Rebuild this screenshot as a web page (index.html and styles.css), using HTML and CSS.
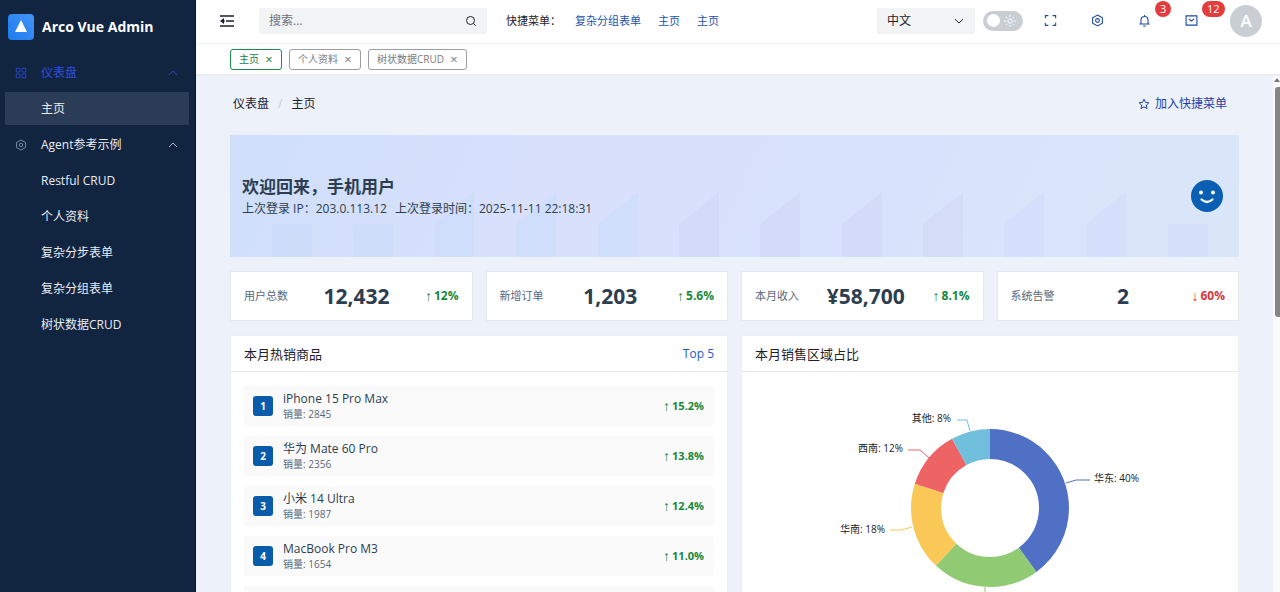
FILE: index.html
```html
<!DOCTYPE html>
<html lang="zh-CN">
<head>
<meta charset="utf-8">
<title>Arco Vue Admin</title>
<link rel="stylesheet" href="styles.css">
</head>
<body>
<svg class="defs" aria-hidden="true">
  <symbol id="hex" viewBox="0 0 48 48"><path d="M24 4 42 14v20L24 44 6 34V14Z"/><circle cx="24" cy="24" r="7"/></symbol>
  <symbol id="caret" viewBox="0 0 48 48"><path d="m8 32 16-16 16 16"/></symbol>
</svg>
<div class="app">
  <aside class="sidebar">
    <div class="brand">
      <svg class="logo" viewBox="0 0 26 26" aria-hidden="true">
        <defs><linearGradient id="lg" x1="1" y1="0" x2="0" y2="1"><stop offset="0" stop-color="#4593f5"/><stop offset="1" stop-color="#1b7cf0"/></linearGradient></defs>
        <rect width="26" height="26" rx="4" fill="url(#lg)"/><path d="m13 6 6 12H7Z" fill="#fff"/>
      </svg>
      <span class="brand-name">Arco Vue Admin</span>
    </div>
    <nav class="menu">
      <button class="item open" type="button">
        <svg class="icon" viewBox="0 0 48 48" aria-hidden="true"><path d="M5 5h15v15H5zM28 5h15v15H28zM5 28h15v15H5zM28 28h15v15H28z"/></svg>
        <span>仪表盘</span><svg class="icon caret" aria-hidden="true"><use href="#caret"/></svg>
      </button>
      <a class="item sub current" href="#">主页</a>
      <button class="item" type="button">
        <svg class="icon" aria-hidden="true"><use href="#hex"/></svg>
        <span>Agent参考示例</span><svg class="icon caret" aria-hidden="true"><use href="#caret"/></svg>
      </button>
      <a class="item sub" href="#">Restful CRUD</a>
      <a class="item sub" href="#">个人资料</a>
      <a class="item sub" href="#">复杂分步表单</a>
      <a class="item sub" href="#">复杂分组表单</a>
      <a class="item sub" href="#">树状数据CRUD</a>
    </nav>
  </aside>
  <div class="page">
    <header class="topbar">
      <button class="fold" type="button" aria-label="折叠菜单">
        <svg viewBox="0 0 14 12" aria-hidden="true"><path d="M0 1h14M6 6h8M0 11h14" fill="none" stroke="#1d2129" stroke-width="1.5"/><path d="M0 6l4-3v6z" fill="#1d2129"/><path d="M3 6h2" stroke="#1d2129"/></svg>
      </button>
      <label class="search">
        <input type="text" placeholder="搜索..." aria-label="搜索">
        <svg class="icon" viewBox="0 0 48 48" aria-hidden="true"><circle cx="22" cy="22" r="16"/><path d="m34 34 9 9"/></svg>
      </label>
      <div class="quick">
        <span class="quick-label">快捷菜单：</span>
        <a href="#">复杂分组表单</a><a href="#">主页</a><a href="#">主页</a>
      </div>
      <div class="tools">
        <div class="lang">
          <select aria-label="语言"><option>中文</option></select>
          <svg class="icon" viewBox="0 0 48 48" aria-hidden="true"><path d="m8 17 16 15 16-15"/></svg>
        </div>
        <label class="switch">
          <input type="checkbox" aria-label="深色模式">
          <svg viewBox="0 0 12 12" aria-hidden="true"><circle cx="6" cy="6" r="2.2"/><path d="M6 0v2M6 10v2M0 6h2M10 6h2M1.8 1.8l1.3 1.3M8.900 8.900l1.300 1.300M1.800 10.200l1.300-1.300M8.900 3.100l1.300-1.300"/></svg>
        </label>
        <button class="tool" type="button" aria-label="全屏"><svg class="icon" viewBox="0 0 48 48" aria-hidden="true"><path d="M5 16V6h11M32 6h11v10M43 32v10H32M16 42H5V32"/></svg></button>
        <button class="tool" type="button" aria-label="设置"><svg class="icon" aria-hidden="true"><use href="#hex"/></svg></button>
        <button class="tool" type="button" aria-label="通知"><svg class="icon" viewBox="0 0 48 48" aria-hidden="true"><path d="M24 4v5M11 37V22a13 13 0 0 1 26 0v15M5 37h38M19 44h10"/></svg><span class="badge">3</span></button>
        <button class="tool" type="button" aria-label="消息"><svg class="icon" viewBox="0 0 48 48" aria-hidden="true"><path d="M4 7h40v34H4zM14 18l10 8 10-8"/></svg><span class="badge">12</span></button>
        <span class="avatar">A</span>
      </div>
    </header>
    <div class="tabs">
      <span class="tab on">主页<button type="button" aria-label="关闭主页">×</button></span>
      <span class="tab">个人资料<button type="button" aria-label="关闭个人资料">×</button></span>
      <span class="tab">树状数据CRUD<button type="button" aria-label="关闭树状数据CRUD">×</button></span>
    </div>
    <div class="viewport">
      <main class="content">
        <div class="crumbs">
          <a href="#">仪表盘</a><span class="slash">/</span><span>主页</span>
          <button class="fav" type="button"><svg class="icon" viewBox="0 0 48 48" aria-hidden="true"><path d="m24 5 6 12 13 2-9.500 9.500L36 42l-12-6.500L12 42l2.500-13.500L5 19l13-2Z"/></svg>加入快捷菜单</button>
        </div>
        <section class="banner">
          <svg class="bars" viewBox="0 0 1009 122" preserveAspectRatio="none" aria-hidden="true">
            <g fill="#c6dbfa" opacity=".5"><path d="M42 122V89h40v33zM123 122V89h40v33zM204 122V89l40-32v65zM286 122V89l40-32v65zM368 122V89l40-32v65z"/></g>
            <g fill="#cdd3f2" opacity=".4"><path d="M449 122V89l40-32v65zM530 122V89l40-32v65zM612 122V89l40-32v65zM693 122V89l40-32v65z"/></g>
            <g fill="#d0d6fa" opacity=".45"><path d="M774 122V89l40-32v65zM856 122V89l40-32v65zM938 122V89h40v33z"/></g>
          </svg>
          <div class="hello">
            <h1>欢迎回来，手机用户</h1>
            <p><span>上次登录 IP：203.0.113.12</span><span>上次登录时间：2025-11-11 22:18:31</span></p>
          </div>
          <svg class="smile" viewBox="0 0 32 32" aria-hidden="true"><circle cx="16" cy="16" r="16" fill="#0a5fb4"/><circle cx="10" cy="12.500" r="2" fill="#fff"/><circle cx="22" cy="12.500" r="2" fill="#fff"/><path d="M10.500 19.500q5.500 5 11 0" fill="none" stroke="#fff" stroke-width="2.200" stroke-linecap="round"/></svg>
        </section>
        <section class="stats">
          <div class="stat"><span class="name">用户总数</span><strong>12,432</strong><span class="rate up"><i>↑</i>12%</span></div>
          <div class="stat"><span class="name">新增订单</span><strong>1,203</strong><span class="rate up"><i>↑</i>5.6%</span></div>
          <div class="stat"><span class="name">本月收入</span><strong>¥58,700</strong><span class="rate up"><i>↑</i>8.1%</span></div>
          <div class="stat"><span class="name">系统告警</span><strong>2</strong><span class="rate down"><i>↓</i>60%</span></div>
        </section>
        <div class="panels">
          <section class="panel">
            <header><h2>本月热销商品</h2><a href="#">Top 5</a></header>
            <ol class="goods">
              <li><b class="rank">1</b><div class="good"><span>iPhone 15 Pro Max</span><small>销量: 2845</small></div><span class="rate up"><i>↑</i>15.2%</span></li>
              <li><b class="rank">2</b><div class="good"><span>华为 Mate 60 Pro</span><small>销量: 2356</small></div><span class="rate up"><i>↑</i>13.8%</span></li>
              <li><b class="rank">3</b><div class="good"><span>小米 14 Ultra</span><small>销量: 1987</small></div><span class="rate up"><i>↑</i>12.4%</span></li>
              <li><b class="rank">4</b><div class="good"><span>MacBook Pro M3</span><small>销量: 1654</small></div><span class="rate up"><i>↑</i>11.0%</span></li>
              <li></li>
            </ol>
          </section>
          <section class="panel">
            <header><h2>本月销售区域占比</h2></header>
            <svg class="chart" viewBox="0 0 400 240" role="img" aria-label="本月销售区域占比">
              <g fill="none" stroke-width="30" transform="rotate(-90 200 136)">
                <circle cx="200" cy="136" r="64" pathLength="100" stroke="#5070c6" stroke-dasharray="40 60"/>
                <circle cx="200" cy="136" r="64" pathLength="100" stroke="#90cb74" stroke-dasharray="22 78" stroke-dashoffset="-40"/>
                <circle cx="200" cy="136" r="64" pathLength="100" stroke="#f9c856" stroke-dasharray="18 82" stroke-dashoffset="-62"/>
                <circle cx="200" cy="136" r="64" pathLength="100" stroke="#ee6464" stroke-dasharray="12 88" stroke-dashoffset="-80"/>
                <circle cx="200" cy="136" r="64" pathLength="100" stroke="#70bfdc" stroke-dasharray="8 92" stroke-dashoffset="-92"/>
              </g>
              <g fill="none">
                <path stroke="#5070c6" d="m276 111 10-3h14"/><path stroke="#70bfdc" d="m180 59-3-11h-10"/>
                <path stroke="#ee6464" d="m139 86-9-8h-12"/><path stroke="#f9c856" d="m122 155-11 3h-11"/><path stroke="#90cb74" d="M195 215v14"/>
              </g>
              <text x="304" y="110">华东: 40%</text>
              <g text-anchor="end"><text x="161" y="50">其他: 8%</text><text x="113" y="80">西南: 12%</text><text x="95" y="161">华南: 18%</text></g>
            </svg>
          </section>
        </div>
      </main>
      <div class="scrollbar" aria-hidden="true"><span class="arrow"></span><span class="thumb"></span></div>
    </div>
  </div>
</div>
</body>
</html>
```
FILE: styles.css
```css
* { box-sizing: border-box; }
body { margin: 0; font: 12px/18px "Open Sans", "Noto Sans CJK SC", sans-serif; color: #1d2129; }
h1, h2, p, ol { margin: 0; padding: 0; }
a { color: inherit; text-decoration: none; }
button { margin: 0; padding: 0; border: 0; background: none; color: inherit; font: inherit; }
i { font-style: normal; }
.defs { display: none; }
.icon { width: 12px; height: 12px; flex: none; fill: none; stroke: currentColor; stroke-width: 4; }

.app { display: flex; height: 100vh; overflow: hidden; }
.sidebar { width: 196px; flex: none; background: #112440; border-right: 1px solid #07152b; color: #e9edf3; }
.brand { display: flex; align-items: center; gap: 8px; padding: 14px 8px; }
.logo { width: 26px; height: 26px; }
.brand-name { font-size: 14px; line-height: 26px; font-weight: 700; color: #fff; }
.menu { display: flex; flex-direction: column; gap: 3px; padding: 2px 6px 0 5px; }
.item { display: flex; align-items: center; gap: 14px; width: 100%; height: 33px; padding: 0 10px; text-align: left; }
.item.open { color: #2f4fe0; }
.item .icon { stroke-width: 3; }
.item > .icon:first-child { color: #9aa7bd; }
.item.open > .icon:first-child { color: #2f4fe0; }
.caret { margin-left: auto; }
.sub { padding-left: 36px; }
.current { background: #2b3c57; }

.page { flex: 1; min-width: 0; display: flex; flex-direction: column; }
.topbar { display: flex; align-items: center; height: 44px; flex: none; padding: 0 18px 2px 24px; background: #fff; border-bottom: 1px solid #f2f3f5; }
.fold { display: flex; margin-right: 25px; }
.fold svg { width: 14px; height: 12px; }
.search { display: flex; align-items: center; flex: 0 1 228px; height: 26px; padding: 0 10px; background: #f2f3f5; }
.search input { flex: 1; min-width: 0; padding: 0; border: 0; outline: 0; background: none; font: inherit; }
.search input::placeholder { color: #6b7280; }
.quick { display: flex; gap: 17px; margin-left: 19px; white-space: nowrap; }
.quick-label { width: 52px; font-size: 11px; }
.quick a { color: #1c4fae; font-size: 11px; }
.tools { display: flex; align-items: center; margin-left: auto; }
.lang { display: flex; align-items: center; width: 98px; height: 26px; padding: 0 10px; background: #f2f3f5; margin-right: 8px; }
.lang select { flex: 1; appearance: none; border: 0; padding: 0; background: none; color: inherit; font: inherit; }
.switch { display: flex; align-items: center; justify-content: space-between; width: 40px; height: 20px; padding: 0 7px 0 4px; margin-right: 4px; border-radius: 10px; background: #c9cdd4; }
.switch input { appearance: none; width: 13px; height: 13px; margin: 0; border-radius: 50%; background: #fff; }
.switch svg { width: 12px; height: 12px; fill: none; stroke: #fff; }
.tool { position: relative; display: flex; align-items: center; justify-content: center; width: 47px; height: 32px; color: #1c4a9c; }
.tool .icon { width: 13px; height: 13px; }
.badge { position: absolute; left: 34px; top: -4px; min-width: 16px; height: 16px; padding: 0 5px; border-radius: 8px; background: #e23c3c; color: #fff; font-size: 11px; line-height: 16px; }
.avatar { width: 32px; height: 32px; margin-left: 15px; border-radius: 50%; background: #c9cdd4; color: #fff; font-size: 17px; font-weight: 600; line-height: 32px; text-align: center; }

.tabs { display: flex; align-items: center; gap: 7px; flex: none; height: 30px; padding: 0 34px; background: #fff; }
.tab { display: flex; align-items: center; gap: 6px; height: 21px; padding: 0 8px; border: 1px solid #9a9da3; border-radius: 3px; color: #777b82; font-size: 10px; }
.tab button { font-size: 13px; line-height: 18px; width: 8px; }
.tab.on { border-color: #1f8a4c; color: #1f7d45; }

.viewport { flex: 1; min-height: 0; display: flex; background: #edf1f9; border-top: 2px solid #ebebf2; }
.content { flex: 1; min-width: 0; overflow: hidden; padding: 15px 34px; }
.crumbs { display: flex; align-items: center; gap: 9px; padding: 0 12px 0 3px; height: 26px; margin-bottom: 18px; }
.slash { color: #c9cdd4; }
.fav { display: flex; align-items: center; gap: 5px; margin-left: auto; color: #1e42ab; }
.banner { position: relative; display: flex; align-items: center; justify-content: space-between; height: 122px; padding: 0 16px 0 12px; background: linear-gradient(115deg, #cfdff9, #d8e0fc 30%, #d9e2fc 65%, #dae6f8); }
.bars { position: absolute; inset: 0; width: 100%; height: 100%; }
.hello, .smile { position: relative; }
.hello h1 { font-size: 17px; line-height: 26px; color: #2c3e50; }
.hello p { display: flex; gap: 8px; font-size: 12px; line-height: 18px; color: #2c3e50; }
.smile { width: 32px; height: 32px; }
.stats { display: grid; grid-template-columns: repeat(4, 1fr); gap: 13px; margin: 14px 0; }
.stat { display: flex; align-items: center; justify-content: space-between; height: 50px; padding: 0 13px; background: #fff; border: 1px solid #e5e8ee; }
.name { color: #5a6878; font-size: 11px; }
.stat strong { font-size: 21px; line-height: 28px; color: #2c3e50; }
.rate { display: flex; align-items: center; gap: 2px; font-weight: 700; font-size: 12px; }
.rate i { font: 14px/16px "Liberation Sans", sans-serif; }
.up { color: #14893c; }
.down { color: #d93636; }
.panels { display: grid; grid-template-columns: repeat(2, 1fr); gap: 13px; }
.panel { min-width: 0; background: #fff; border: 1px solid #eceff4; }
.panel header { display: flex; align-items: center; justify-content: space-between; height: 36px; padding: 0 13px; border-bottom: 1px solid #e5e6eb; }
.panel h2 { font-size: 13px; font-weight: 400; }
.panel header a { color: #2858c8; }
.goods { display: flex; flex-direction: column; gap: 10px; padding: 14px 13px; list-style: none; }
.goods li { display: flex; align-items: center; gap: 10px; height: 40px; padding: 0 10px 0 9px; background: #fafafa; border-radius: 3px; }
.rank { width: 20px; height: 20px; border-radius: 3px; background: #0a5cab; color: #fff; font-size: 10px; line-height: 20px; text-align: center; }
.good { display: flex; flex-direction: column; flex: 1; color: #2c3e50; }
.good span { font-size: 12px; line-height: 16px; }
.good small { font-size: 10px; line-height: 14px; color: #5a6878; }
.goods .rate { font-size: 11px; }
.chart { display: block; width: 400px; max-width: 100%; margin: 0 auto; }
.chart text { font-size: 10px; fill: #222; }
.scrollbar { width: 7px; flex: none; display: flex; flex-direction: column; align-items: flex-end; background: #fafafc; }
.arrow { margin: 2px 0 5px; border: 3px solid transparent; border-top: 0; border-bottom: 4px solid #777; }
.thumb { width: 5px; height: 230px; border-radius: 3px 0 0 3px; background: #858585; }
```
